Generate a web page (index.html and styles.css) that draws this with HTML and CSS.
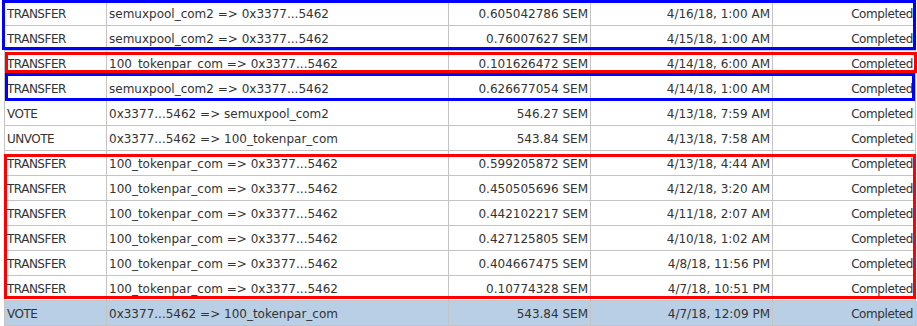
FILE: index.html
```html
<!DOCTYPE html>
<html>
<head>
<meta charset="utf-8">
<link rel="stylesheet" href="styles.css">
</head>
<body>
<div class="pane">
  <div class="table">
    <div class="row"><div class="c type">TRANSFER</div><div class="c">semuxpool_com2 =&gt; 0x3377...5462</div><div class="c num">0.605042786 SEM</div><div class="c num">4/16/18, 1:00 AM</div><div class="c num status">Completed</div></div>
    <div class="row"><div class="c type">TRANSFER</div><div class="c">semuxpool_com2 =&gt; 0x3377...5462</div><div class="c num">0.76007627 SEM</div><div class="c num">4/15/18, 1:00 AM</div><div class="c num status">Completed</div></div>
    <div class="row"><div class="c type">TRANSFER</div><div class="c">100_tokenpar_com =&gt; 0x3377...5462</div><div class="c num">0.101626472 SEM</div><div class="c num">4/14/18, 6:00 AM</div><div class="c num status">Completed</div></div>
    <div class="row"><div class="c type">TRANSFER</div><div class="c">semuxpool_com2 =&gt; 0x3377...5462</div><div class="c num">0.626677054 SEM</div><div class="c num">4/14/18, 1:00 AM</div><div class="c num status">Completed</div></div>
    <div class="row"><div class="c type">VOTE</div><div class="c">0x3377...5462 =&gt; semuxpool_com2</div><div class="c num">546.27 SEM</div><div class="c num">4/13/18, 7:59 AM</div><div class="c num status">Completed</div></div>
    <div class="row"><div class="c type">UNVOTE</div><div class="c">0x3377...5462 =&gt; 100_tokenpar_com</div><div class="c num">543.84 SEM</div><div class="c num">4/13/18, 7:58 AM</div><div class="c num status">Completed</div></div>
    <div class="row"><div class="c type">TRANSFER</div><div class="c">100_tokenpar_com =&gt; 0x3377...5462</div><div class="c num">0.599205872 SEM</div><div class="c num">4/13/18, 4:44 AM</div><div class="c num status">Completed</div></div>
    <div class="row"><div class="c type">TRANSFER</div><div class="c">100_tokenpar_com =&gt; 0x3377...5462</div><div class="c num">0.450505696 SEM</div><div class="c num">4/12/18, 3:20 AM</div><div class="c num status">Completed</div></div>
    <div class="row"><div class="c type">TRANSFER</div><div class="c">100_tokenpar_com =&gt; 0x3377...5462</div><div class="c num">0.442102217 SEM</div><div class="c num">4/11/18, 2:07 AM</div><div class="c num status">Completed</div></div>
    <div class="row"><div class="c type">TRANSFER</div><div class="c">100_tokenpar_com =&gt; 0x3377...5462</div><div class="c num">0.427125805 SEM</div><div class="c num">4/10/18, 1:02 AM</div><div class="c num status">Completed</div></div>
    <div class="row"><div class="c type">TRANSFER</div><div class="c">100_tokenpar_com =&gt; 0x3377...5462</div><div class="c num">0.404667475 SEM</div><div class="c num">4/8/18, 11:56 PM</div><div class="c num status">Completed</div></div>
    <div class="row"><div class="c type">TRANSFER</div><div class="c">100_tokenpar_com =&gt; 0x3377...5462</div><div class="c num">0.10774328 SEM</div><div class="c num">4/7/18, 10:51 PM</div><div class="c num status">Completed</div></div>
    <div class="row selected"><div class="c type">VOTE</div><div class="c">0x3377...5462 =&gt; 100_tokenpar_com</div><div class="c num">543.84 SEM</div><div class="c num">4/7/18, 12:09 PM</div><div class="c num status">Completed</div></div>
  </div>
  <div class="mark blue mark-1"></div>
  <div class="mark red mark-2"></div>
  <div class="mark blue mark-3"></div>
  <div class="mark red mark-4"></div>
</div>
</body>
</html>
```
FILE: styles.css
```css
html, body {
  margin: 0;
  padding: 0;
  background: #ffffff;
}
body {
  width: 917px;
  height: 326px;
  overflow: hidden;
}
.pane {
  position: relative;
  width: 917px;
  height: 326px;
  padding-left: 4px;
  padding-top: 1px;
  box-sizing: border-box;
}
.table {
  border-left: 1px solid #c4c4c4;
  font-family: "DejaVu Sans", sans-serif;
  font-size: 12px;
  color: #333333;
}
.row {
  display: grid;
  grid-template-columns: 102px 342px 142px 182px 143px;
  height: 25px;
}
.row.selected {
  background: #b8cfe5;
}
.c {
  box-sizing: border-box;
  height: 25px;
  border-right: 1px solid #c4c4c4;
  border-bottom: 1px solid #c4c4c4;
  padding: 3px 2px 0 2px;
  line-height: 20px;
  white-space: nowrap;
  overflow: hidden;
}
.type {
  letter-spacing: -0.5px;
}
.num {
  text-align: right;
}
.status {
  letter-spacing: -0.4px;
}
.mark {
  position: absolute;
  box-sizing: border-box;
  border: 3px solid;
}
.blue { border-color: #0000ff; }
.red { border-color: #ff0000; }
.mark-1 { left: 2px; top: 0; width: 914px; height: 50px; }
.mark-2 { left: 5px; top: 52px; width: 912px; height: 21px; }
.mark-3 { left: 5px; top: 73px; width: 910px; height: 28px; }
.mark-4 { left: 4px; top: 154px; width: 912px; height: 145px; }
```
